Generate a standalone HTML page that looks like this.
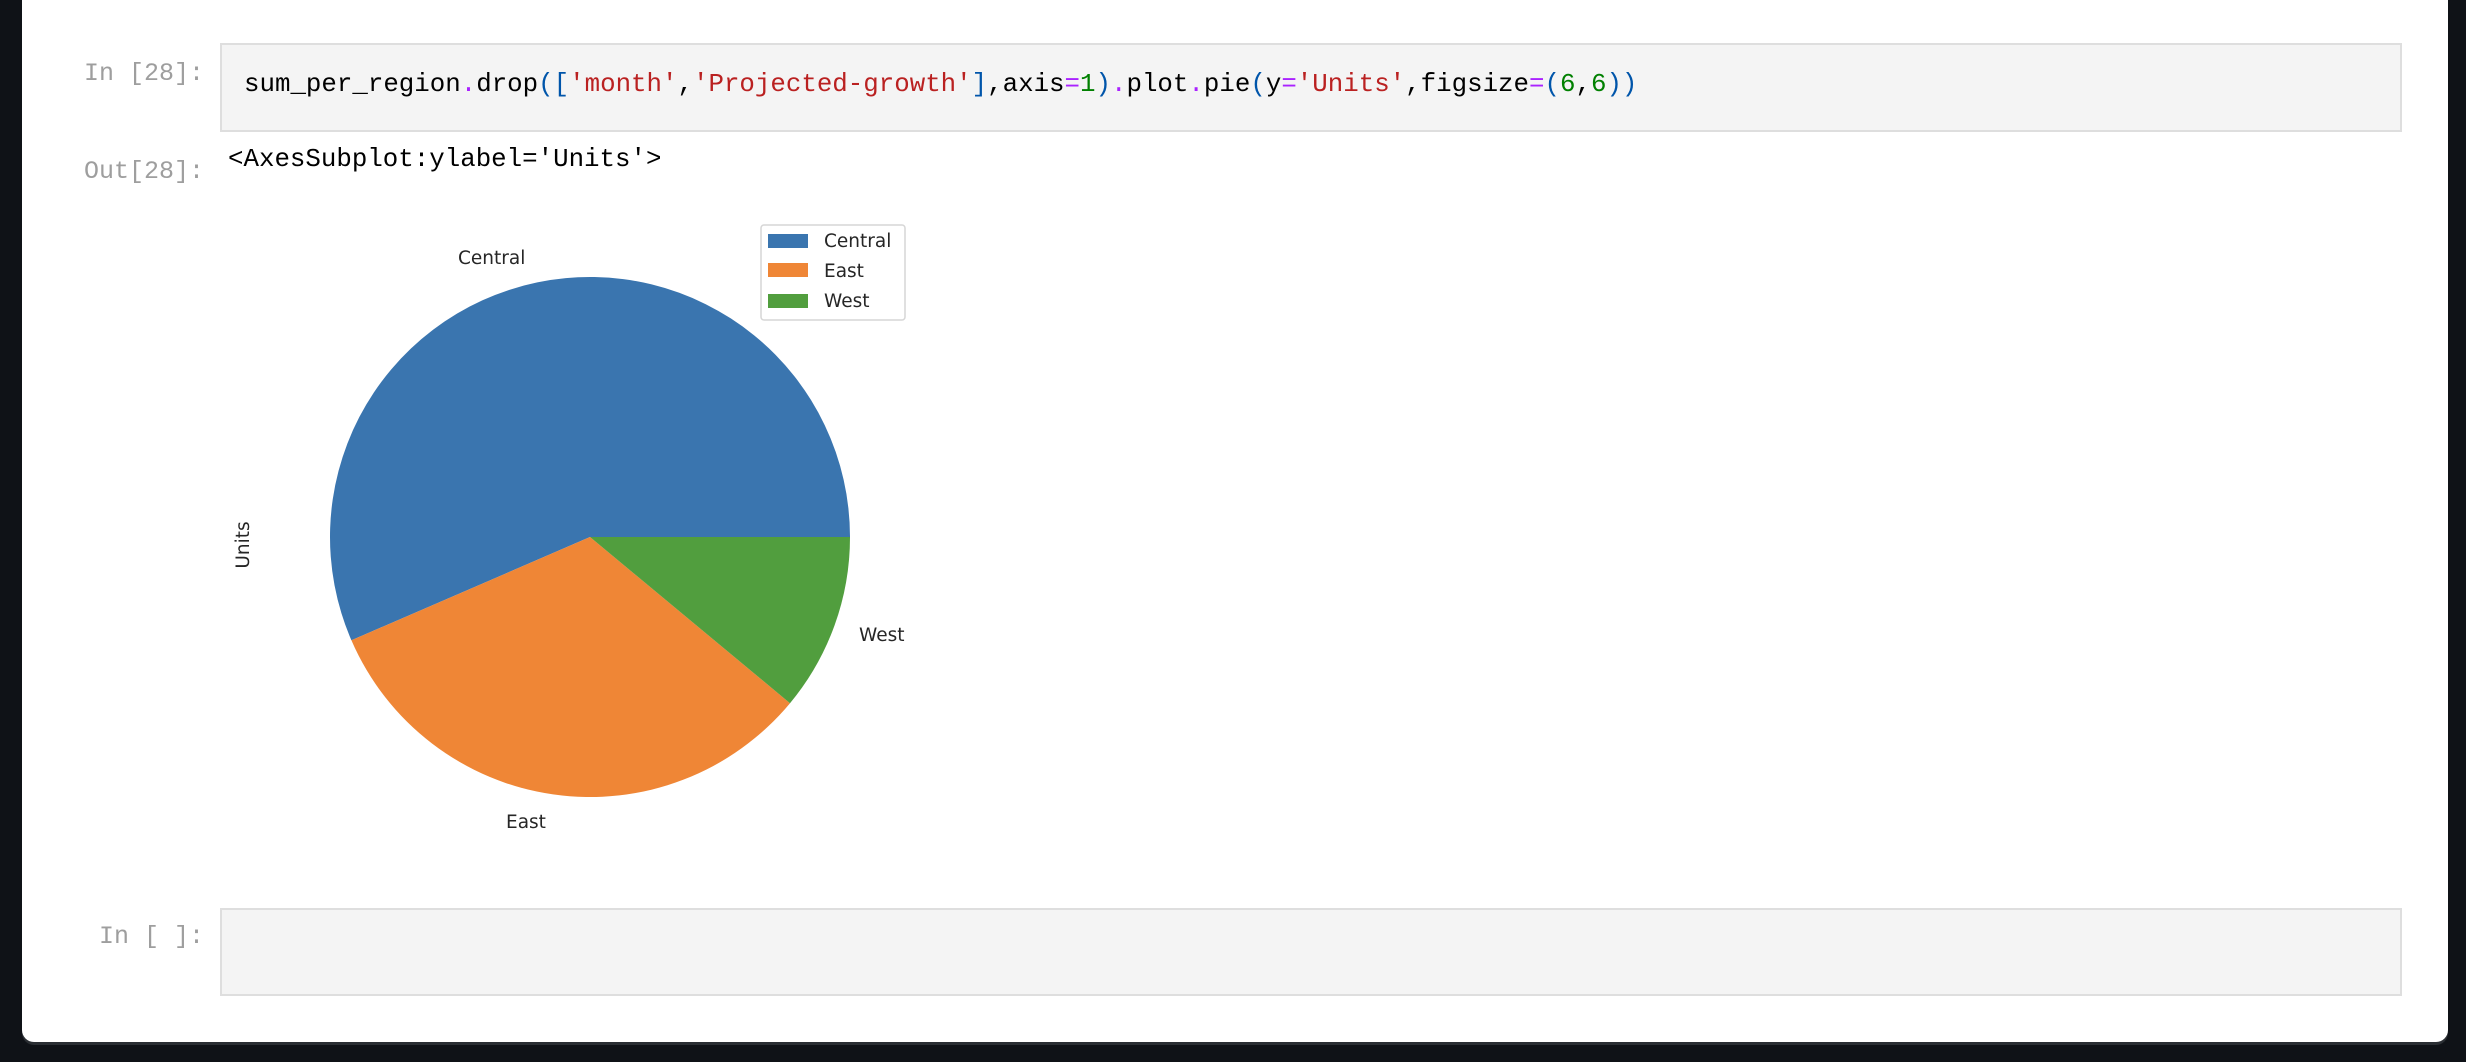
<!DOCTYPE html>
<html><head><meta charset="utf-8"><style>
body{margin:0;width:2466px;height:1062px;background:#0f1217;position:relative;overflow:hidden;font-family:"Liberation Mono",monospace}
.panel{position:absolute;left:22px;top:-20px;width:2426px;height:1062px;background:#fff;border-radius:0 0 12px 12px;box-shadow:0 3px 0 #2a2e33}
.lbl{position:absolute;color:#9e9e9e;font-size:25px;line-height:1;text-align:right;width:200px;left:4px}
.cell{position:absolute;left:220px;width:2182px;background:#f4f4f4;border:2px solid #dedede;box-sizing:border-box}
.code{position:absolute;left:244px;top:72px;font-size:25.8px;color:#000;white-space:pre;line-height:1}
.p{color:#aa22ff}.s{color:#ba2121}.b{color:#0055aa}.n{color:#008000}
.out{position:absolute;left:228px;top:147px;font-size:25.8px;white-space:pre;line-height:1}
</style></head><body>
<div class="panel"></div>
<div class="cell" style="top:43px;height:89px"></div>
<div class="lbl" style="top:61px">In [28]:</div>
<div class="code">sum_per_region<span class="p">.</span>drop<span class="b">([</span><span class="s">'month'</span>,<span class="s">'Projected-growth'</span><span class="b">]</span>,axis<span class="p">=</span><span class="n">1</span><span class="b">)</span><span class="p">.</span>plot<span class="p">.</span>pie<span class="b">(</span>y<span class="p">=</span><span class="s">'Units'</span>,figsize<span class="p">=</span><span class="b">(</span><span class="n">6</span>,<span class="n">6</span><span class="b">))</span></div>
<div class="lbl" style="top:159px">Out[28]:</div>
<div class="out">&lt;AxesSubplot:ylabel='Units'&gt;</div>
<svg style="position:absolute;left:0;top:0" width="2466" height="1062" font-family="'DejaVu Sans',sans-serif" font-size="18.5" fill="#262626">
<path d="M590,537 L850,537 A260,260 0 1 0 351.4,640.3 Z" fill="#3a75af"/>
<path d="M590,537 L351.4,640.3 A260,260 0 0 0 790,703.2 Z" fill="#ef8636"/>
<path d="M590,537 L790,703.2 A260,260 0 0 0 850,537 Z" fill="#519e3e"/>
<text x="458" y="264">Central</text>
<text x="506" y="828">East</text>
<text x="859" y="641">West</text>
<text transform="translate(249,545) rotate(-90)" text-anchor="middle">Units</text>
<rect x="761" y="225" width="144" height="95" rx="3" fill="#fff" stroke="#d6d6d6" stroke-width="1.5"/>
<rect x="768" y="234" width="40" height="14" fill="#3a75af"/>
<rect x="768" y="263" width="40" height="14" fill="#ef8636"/>
<rect x="768" y="294" width="40" height="14" fill="#519e3e"/>
<text x="824" y="247">Central</text>
<text x="824" y="277">East</text>
<text x="824" y="307">West</text>
</svg>
<div class="cell" style="top:908px;height:88px"></div>
<div class="lbl" style="top:924px">In [ ]:</div>
</body></html>
